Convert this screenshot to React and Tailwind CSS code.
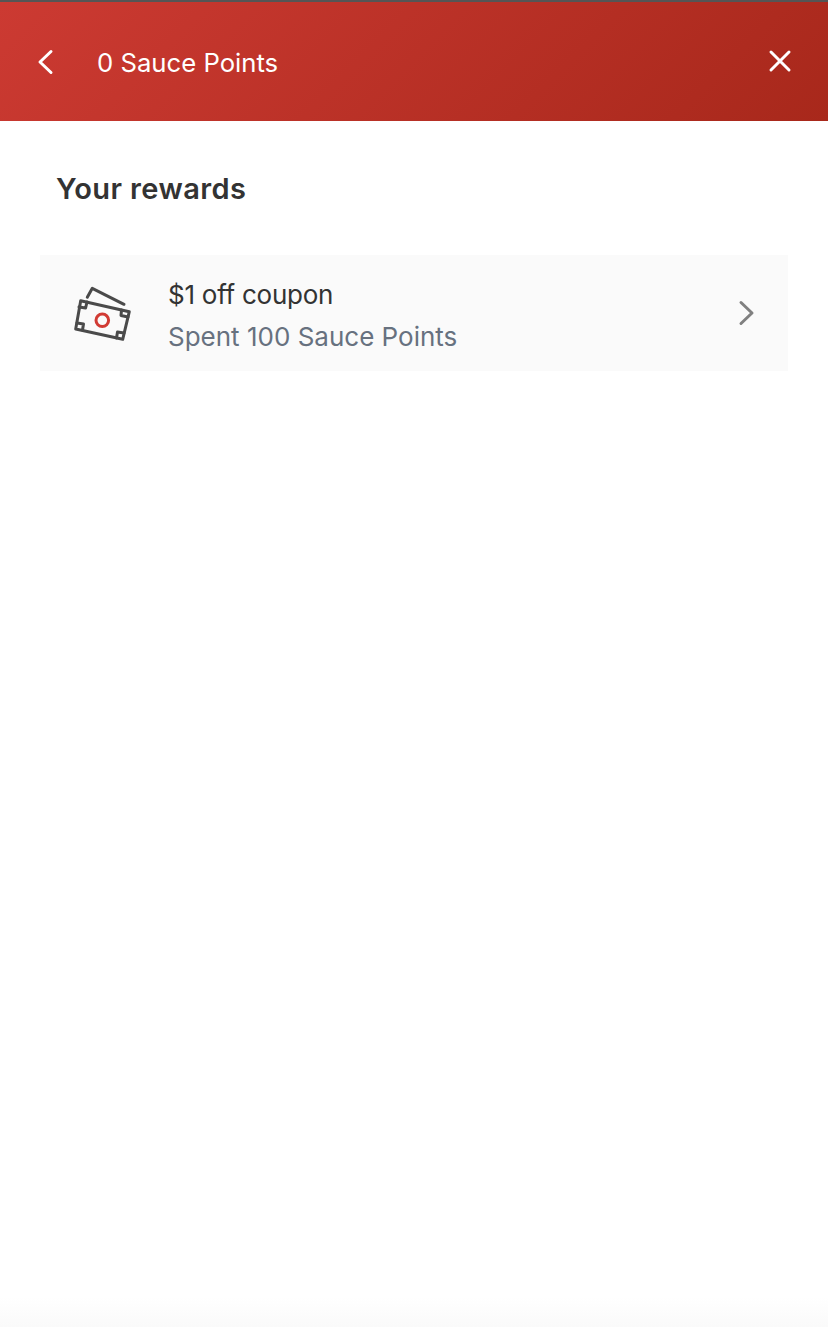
import React from 'react';

const CouponIcon = () => (
  <svg width="66" height="66" viewBox="0 0 66 66" fill="none" strokeLinecap="round" strokeLinejoin="round">
    <path d="M17.3 17.3 L22.3 8.3 L54 24.3" stroke="#4a4a4a" strokeWidth="3" />
    <path d="M10.7 20.7 L59.3 31.7 L52.7 59.3 L5.7 49 Z" stroke="#4a4a4a" strokeWidth="3" />
    <path d="M9 27 L15.6 28 L17 22" stroke="#4a4a4a" strokeWidth="3" />
    <path d="M51.5 30 L51 35.5 L58 37" stroke="#4a4a4a" strokeWidth="3" />
    <path d="M46.5 58 L47.5 52 L54 53" stroke="#4a4a4a" strokeWidth="3" />
    <path d="M7 43 L13.5 44 L12.5 50" stroke="#4a4a4a" strokeWidth="3" />
    <circle cx="32.3" cy="40.3" r="6.3" stroke="#d13b34" strokeWidth="3" />
  </svg>
);

const RewardRow = ({ title, subtitle }) => (
  <div className="mx-10 h-[116px] flex items-center bg-[#fafafa]">
    <div className="ml-[30px] w-[66px] h-[66px] shrink-0">
      <CouponIcon />
    </div>
    <div className="ml-[32px] flex-1 pt-[6px] text-[26px] leading-[42px]">
      <div className="text-[#333333] tracking-[-0.25px]">{title}</div>
      <div className="text-[#67717f]">{subtitle}</div>
    </div>
    <svg className="mr-[32px]" width="18" height="26" viewBox="0 0 18 26" fill="none">
      <path d="M3 2.5 L14 13 L3 23.5" stroke="#808080" strokeWidth="3" strokeLinecap="round" strokeLinejoin="round" />
    </svg>
  </div>
);

const App = () => {
  return (
    <div className="w-[828px] h-[1334px] flex flex-col bg-white font-['Inter','Lato',sans-serif]">
      <div className="h-[121px] shrink-0 flex items-center border-t-2 border-[#555555] bg-linear-135 from-[#cc3a32] to-[#a8281b] text-white">
        <svg className="ml-[36px]" width="20" height="26" viewBox="0 0 20 26" fill="none">
          <path d="M15 2.5 L4 13 L15 23.5" stroke="#ffffff" strokeWidth="3" strokeLinecap="round" strokeLinejoin="round" />
        </svg>
        <div className="ml-[41px] flex-1 text-[25.7px] leading-none pt-[3px]">0 Sauce Points</div>
        <svg className="mr-[36px] -mt-[2px]" width="24" height="24" viewBox="0 0 24 24" fill="none">
          <path d="M3 3 L21 21 M21 3 L3 21" stroke="#ffffff" strokeWidth="3" strokeLinecap="round" />
        </svg>
      </div>
      <h2 className="mt-[50px] mb-[48px] ml-14 text-[29px] leading-[36px] tracking-[0.4px] font-semibold text-[#333333]">Your rewards</h2>
      <RewardRow title="$1 off coupon" subtitle="Spent 100 Sauce Points" />
      <div className="flex-1" />
      <div className="h-[30px] bg-linear-to-b from-white to-[#fafafa]" />
      <div className="h-[7px] bg-white" />
    </div>
  );
};

export default App;
